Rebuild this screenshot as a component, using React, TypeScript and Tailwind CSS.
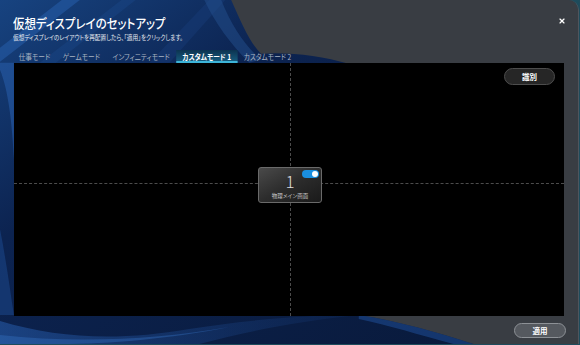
import { X } from 'lucide-react';

const TABS = ['仕事モード', 'ゲームモード', 'インフィニティモード', 'カスタムモード 1', 'カスタムモード 2'];
const ACTIVE_TAB = 3;

function Wallpaper() {
  return (
    <svg viewBox="0 0 580 345" preserveAspectRatio="none" className="absolute inset-0 h-full w-full">
      <defs>
        <linearGradient id="navy" x1="0" y1="0" x2="1" y2="1">
          <stop offset="0" stopColor="#174380" />
          <stop offset="0.35" stopColor="#0c2350" />
          <stop offset="1" stopColor="#091a3c" />
        </linearGradient>
        <linearGradient id="ribbon" x1="0" y1="0" x2="1" y2="0">
          <stop offset="0" stopColor="#2a64b8" stopOpacity="0.9" />
          <stop offset="1" stopColor="#1c4a94" stopOpacity="0.2" />
        </linearGradient>
      </defs>
      <rect width="580" height="345" fill="#393d43" />
      <path d="M0 0 H232 C242 22 250 42 262 54 C290 52 322 56 350 64 L360 316 C400 322 440 334 475 345 H0 Z" fill="url(#navy)" />
      {/* streaks in the header */}
      <path d="M0 48 L62 0 H80 L0 62 Z" fill="#2e6cc0" opacity="0.4" />
      <path d="M40 63 L122 0 H136 L56 63 Z" fill="#1d4f96" opacity="0.3" />
      <path d="M150 63 L210 0 H226 L170 63 Z" fill="#1a3f7c" opacity="0.4" />
      <path d="M205 0 H222 C232 25 245 45 262 60 L250 63 C232 45 215 22 205 0 Z" fill="#244f8e" opacity="0.5" />
      {/* left strip */}
      <path d="M0 70 C8 90 12 120 14 160 V63 H0 Z" fill="#2a62b2" opacity="0.5" />
      <path d="M0 230 C6 260 10 290 14 316 H0 Z" fill="#1f4f98" opacity="0.45" />
      {/* bottom ribbons */}
      <path d="M0 322 C60 340 120 342 190 330 C240 322 300 316 360 316 C300 322 250 332 200 345 H0 Z" fill="url(#ribbon)" opacity="0.55" />
      <path d="M0 336 C80 345 160 340 230 328 C170 340 110 345 60 345 H0 Z" fill="#3a78cc" opacity="0.35" />
      <path d="M360 316 C400 322 440 334 475 345 H455 C420 336 390 326 360 320 Z" fill="#1c4a90" opacity="0.6" />
    </svg>
  );
}

function DisplayCard() {
  return (
    <div className="absolute left-[244px] top-[104px] flex h-[36px] w-[64px] flex-col items-center rounded-[3px] border border-[#6a6a6a] bg-gradient-to-br from-[#4a4a4a] via-[#2c2c2c] to-[#1a1a1a]">
      <div className="absolute right-[2px] top-[2px] flex h-[8px] w-[17px] items-center justify-end rounded-full bg-[#1a8fe0] pr-[1px]">
        <div className="h-[6px] w-[6px] rounded-full bg-white" />
      </div>
      <span className="mt-[6px] text-[17px] font-light leading-[14px] text-[#dcdcdc]">1</span>
      <span className="mt-[5px] text-[5.5px] leading-[6px] text-[#c8c8c8]">物理メイン画面</span>
    </div>
  );
}

export default function App() {
  return (
    <div className="relative h-[345px] w-[580px] overflow-hidden bg-[#1e4c5c] [font-family:'Noto_Sans_CJK_JP','Noto_Sans',sans-serif] [font-feature-settings:'palt']">
      <div className="absolute inset-0 right-[1px] bottom-[1px] overflow-hidden rounded-tr-[10px] border-r border-[#4f555d]">
        <Wallpaper />
        <div className="relative flex h-full flex-col">
          <header className="relative px-[13px] pt-[15px]">
            <h1 className="origin-left scale-x-[0.88] text-[13px] leading-[15px] font-medium text-white">仮想ディスプレイのセットアップ</h1>
            <p className="mt-[3px] origin-left scale-x-[0.87] text-[6.5px] leading-[8px] text-[#e4e8ee]">仮想ディスプレイのレイアウトを再配置したら、「適用」をクリックします。</p>
            <button className="absolute right-[12px] top-[17px] text-white">
              <X size={8} strokeWidth={3.5} />
            </button>
          </header>

          <nav className="mt-[9px] flex h-[13px] origin-left scale-x-[0.89] pl-[14px]">
            {TABS.map((tab, i) =>
              i === ACTIVE_TAB ? (
                <span key={tab} className="flex items-center border-b-2 border-[#3db4d8] bg-gradient-to-b from-[#0c3350] to-[#165a7c] px-[7px] pt-[2px] text-[7.5px] font-bold text-white">
                  {tab}
                </span>
              ) : (
                <span key={tab} className="flex items-center px-[7px] text-[7.5px] text-[#a8b3c1]">
                  {tab}
                </span>
              )
            )}
          </nav>

          <section className="relative mx-[14px] h-[253px] bg-black">
            <div className="absolute left-0 right-0 top-[120px] border-t border-dashed border-[#4c4c4c]" />
            <div className="absolute bottom-0 left-[276px] top-0 border-l border-dashed border-[#4c4c4c]" />
            <button className="absolute right-[9px] top-[5px] flex h-[17px] w-[51px] items-center justify-center rounded-full border border-[#4d4d4d] bg-[#262626] text-[7.5px] font-bold text-white">
              識別
            </button>
            <DisplayCard />
          </section>

          <footer className="flex justify-end pr-[12px] pt-[7px]">
            <button className="flex h-[15px] w-[52px] items-center justify-center rounded-full border border-[#8d9196] bg-[#55595f] text-[7.5px] font-bold text-white">
              適用
            </button>
          </footer>
        </div>
      </div>
    </div>
  );
}
